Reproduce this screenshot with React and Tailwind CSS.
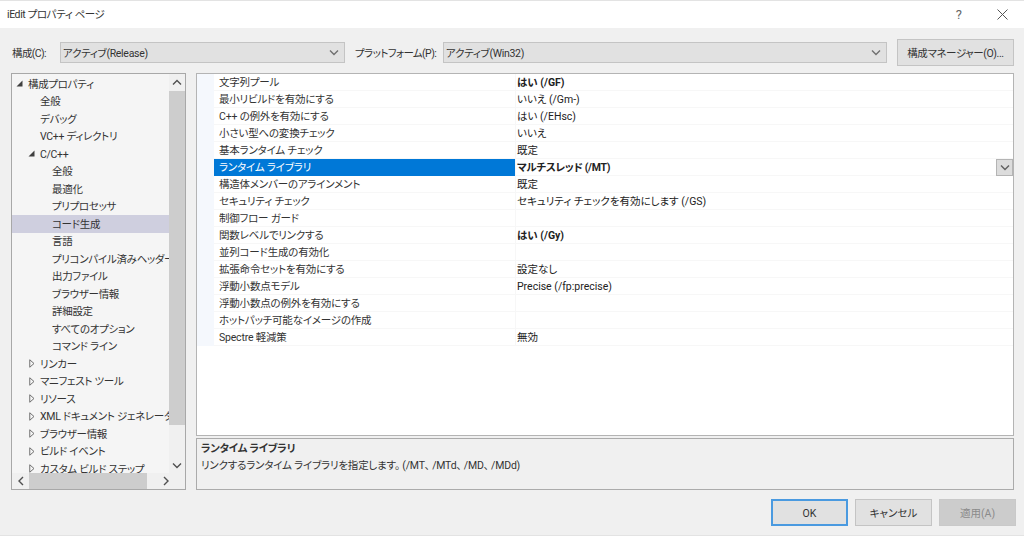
const tree = [
  { t: "構成プロパティ", lv: 0, icon: "open" },
  { t: "全般", lv: 1 },
  { t: "デバッグ", lv: 1 },
  { t: "VC++ ディレクトリ", lv: 1 },
  { t: "C/C++", lv: 1, icon: "open" },
  { t: "全般", lv: 2 },
  { t: "最適化", lv: 2 },
  { t: "プリプロセッサ", lv: 2 },
  { t: "コード生成", lv: 2, sel: true },
  { t: "言語", lv: 2 },
  { t: "プリコンパイル済みヘッダー", lv: 2 },
  { t: "出力ファイル", lv: 2 },
  { t: "ブラウザー情報", lv: 2 },
  { t: "詳細設定", lv: 2 },
  { t: "すべてのオプション", lv: 2 },
  { t: "コマンド ライン", lv: 2 },
  { t: "リンカー", lv: 1, icon: "closed" },
  { t: "マニフェスト ツール", lv: 1, icon: "closed" },
  { t: "リソース", lv: 1, icon: "closed" },
  { t: "XML ドキュメント ジェネレーター", lv: 1, icon: "closed" },
  { t: "ブラウザー情報", lv: 1, icon: "closed" },
  { t: "ビルド イベント", lv: 1, icon: "closed" },
  { t: "カスタム ビルド ステップ", lv: 1, icon: "closed" },
];

const rows = [
  ["文字列プール", "はい (/GF)", true],
  ["最小リビルドを有効にする", "いいえ (/Gm-)"],
  ["C++ の例外を有効にする", "はい (/EHsc)"],
  ["小さい型への変換チェック", "いいえ"],
  ["基本ランタイム チェック", "既定"],
  ["ランタイム ライブラリ", "マルチスレッド (/MT)", true, true],
  ["構造体メンバーのアラインメント", "既定"],
  ["セキュリティ チェック", "セキュリティ チェックを有効にします (/GS)"],
  ["制御フロー ガード", ""],
  ["関数レベルでリンクする", "はい (/Gy)", true],
  ["並列コード生成の有効化", ""],
  ["拡張命令セットを有効にする", "設定なし"],
  ["浮動小数点モデル", "Precise (/fp:precise)"],
  ["浮動小数点の例外を有効にする", ""],
  ["ホットパッチ可能なイメージの作成", ""],
  ["Spectre 軽減策", "無効"],
];

function Chevron({ dir = "down", className = "" }) {
  const d = {
    down: "M1 1.5 L5 5.5 L9 1.5",
    up: "M1 5.5 L5 1.5 L9 5.5",
    left: "M6 1 L2 5 L6 9",
    right: "M2 1 L6 5 L2 9",
  }[dir];
  const vert = dir === "down" || dir === "up";
  return (
    <svg width={vert ? 10 : 8} height={vert ? 7 : 10} viewBox={vert ? "0 0 10 7" : "0 0 8 10"} className={className} fill="none" stroke="currentColor" strokeWidth="1.4">
      <path d={d} />
    </svg>
  );
}

function Expander({ kind }) {
  if (kind === "open")
    return (
      <svg width="7" height="7" viewBox="0 0 7 7" className="shrink-0">
        <path d="M6.5 0.5 V6.5 H0.5 Z" fill="#404040" />
      </svg>
    );
  return (
    <svg width="6" height="9" viewBox="0 0 6 9" className="shrink-0">
      <path d="M0.75 0.75 L5 4.5 L0.75 8.25 Z" fill="none" stroke="#707070" strokeWidth="1" />
    </svg>
  );
}

function Combo({ label, text, width, labelWidth }) {
  return (
    <div className="flex items-center">
      <span style={{ width: labelWidth }} className="whitespace-nowrap pt-[1px] tracking-[-0.6px] text-[#333333]">{label}</span>
      <div style={{ width }} className="flex h-[21px] items-center justify-between border border-[#c4c4c4] bg-[#e1e1e1] pl-[2px] pr-[5px] text-[#333333]">
        <span className="pt-[1px] tracking-[-0.3px]">{text}</span>
        <Chevron className="text-[#707070]" />
      </div>
    </div>
  );
}

function Btn({ children, className = "" }) {
  return (
    <div className={`flex h-[27px] w-[77px] items-center justify-center border pt-[1px] ${className}`}>{children}</div>
  );
}

export default function App() {
  return (
    <div className="flex h-[536px] w-[1024px] flex-col overflow-hidden border-y border-[#e3e3e3] bg-[#f0f0f0] font-['Roboto','Noto_Sans_CJK_JP',sans-serif] text-[10.5px] leading-[17px] [font-feature-settings:'palt']">
      <div className="flex h-[27px] shrink-0 items-center justify-between bg-white pl-[7px] pr-[16px]">
        <span className="tracking-[-0.4px] text-[#333333]">iEdit プロパティ ページ</span>
        <div className="flex items-center gap-[35px] text-[#666666]">
          <span className="text-[13px]">?</span>
          <svg width="11" height="11" viewBox="0 0 11 11" fill="none" stroke="#555555" strokeWidth="1">
            <path d="M0.5 0.5 L10.5 10.5 M10.5 0.5 L0.5 10.5" />
          </svg>
        </div>
      </div>

      <div className="flex h-[45px] shrink-0 items-center pl-[12px] pr-[10px] pt-[4px]">
        <Combo label="構成(C):" text="アクティブ(Release)" width={285} labelWidth={48} />
        <div className="w-[10px]" />
        <Combo label="プラットフォーム(P):" text="アクティブ(Win32)" width={444} labelWidth={88} />
        <div className="ml-auto flex h-[27px] w-[117px] items-center justify-center whitespace-nowrap border border-[#c4c4c4] bg-[#e1e1e1] pt-[1px] tracking-[-0.4px] text-[#333333]">構成マネージャー(O)...</div>
      </div>

      <div className="flex h-[417px] shrink-0 gap-[10px] pl-[11px] pr-[10px]">
        <div className="flex h-full w-[175px] flex-col border border-[#a8a8a8] bg-[#f5f5f5]">
          <div className="flex min-h-0 flex-1">
            <div className="min-w-0 flex-1 overflow-hidden whitespace-nowrap pt-[1px]">
              {tree.map((n, i) => (
                <div key={i} className={`flex h-[17.5px] items-center text-[#333333] ${n.sel ? "bg-[#cfcfdf]" : ""}`}>
                  <span className={`flex shrink-0 items-center justify-end pr-[5px] ${n.lv === 0 ? "w-[16px]" : n.lv === 1 ? "w-[28px]" : "w-[40px]"}`}>
                    {n.icon && <Expander kind={n.icon} />}
                  </span>
                  <span className="pt-[1px] tracking-[-0.3px]">{n.t}</span>
                </div>
              ))}
            </div>
            <div className="flex w-[16px] shrink-0 flex-col bg-[#f0f0f0]">
              <div className="flex h-[17px] items-center justify-center text-[#505050]"><Chevron dir="up" /></div>
              <div className="h-[334px] bg-[#cdcdcd]" />
              <div className="flex flex-1 items-end justify-center pb-[4px] text-[#505050]"><Chevron /></div>
            </div>
          </div>
          <div className="flex h-[16px] shrink-0 items-center bg-[#f0f0f0]">
            <div className="flex w-[17px] justify-center text-[#505050]"><Chevron dir="left" /></div>
            <div className="h-full w-[118px] bg-[#cdcdcd]" />
            <div className="flex flex-1 justify-center text-[#505050]"><Chevron dir="right" /></div>
          </div>
        </div>

        <div className="flex h-full min-w-0 flex-1 flex-col gap-[2px]">
          <div className="h-[363px] border border-[#b4b4b4] bg-white">
            {rows.map(([name, val, bold, sel], i) => (
              <div key={i} className="flex h-[17px] items-stretch">
                <div className="w-[17px] shrink-0 bg-[#f5f8fd]" />
                <div className={`flex w-[301px] shrink-0 items-center whitespace-nowrap border-b pl-[5px] pt-[1px] tracking-[-0.2px] ${sel ? "border-[#0078d7] bg-[#0078d7] text-white" : "border-[#f7f7f7] text-[#333333]"}`}>{name}</div>
                <div className={`relative flex flex-1 items-center border-b border-l border-[#f7f7f7] pl-[1px] pt-[1px] text-[#222222] ${bold ? "font-bold" : ""} ${sel ? "tracking-[-0.3px]" : ""}`}>
                  {val}
                  {sel && (
                    <div className="absolute right-0 top-0 flex h-[17px] w-[17px] items-center justify-center border border-[#b4b4b4] bg-[#dcdcdc] text-[#606060]">
                      <Chevron />
                    </div>
                  )}
                </div>
              </div>
            ))}
          </div>
          <div className="h-[52px] border border-[#ababab] bg-[#f0f0f0] px-[4px] pt-[1px] text-[#333333]">
            <div className="font-bold tracking-[-0.3px]">ランタイム ライブラリ</div>
            <div className="tracking-[-0.2px]">リンクするランタイム ライブラリを指定します。 (/MT、 /MTd、 /MD、 /MDd)</div>
          </div>
        </div>
      </div>

      <div className="flex flex-1 items-center justify-end gap-[7px] pr-[8px]">
        <Btn className="border-2 border-[#4a9ae0] bg-[#e1e1e1] text-[#333333]">OK</Btn>
        <Btn className="border-[#c4c4c4] bg-[#e1e1e1] text-[#333333]">キャンセル</Btn>
        <Btn className="border-[#c9c9c9] bg-[#cccccc] text-[#8a8a8a]">適用(A)</Btn>
      </div>
    </div>
  );
}
